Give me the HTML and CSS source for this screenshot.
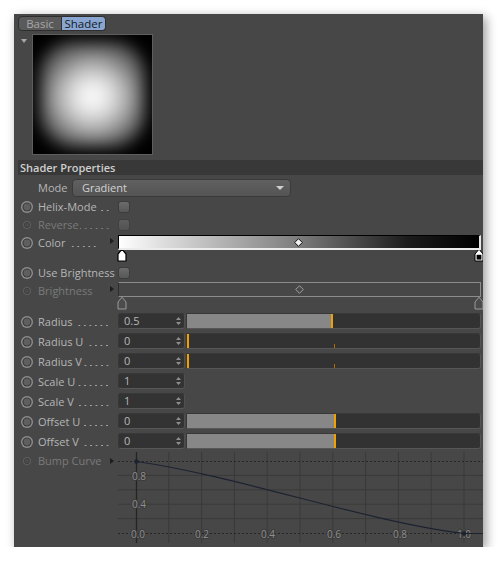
FILE: index.html
```html
<!DOCTYPE html>
<html>
<head>
<meta charset="utf-8">
<link rel="stylesheet" href="styles.css">
</head>
<body>
<div class="win">
  <div class="tabs">
    <div class="tab tab-basic">Basic</div>
    <div class="tab tab-active">Shader</div>
  </div>
  <div class="preview-row">
    <span class="tri-down"></span>
    <div class="preview"><div class="blob"></div></div>
  </div>
  <div class="group-head">Shader Properties</div>

  <div class="row row-mode">
    <span class="radio-slot"></span>
    <span class="mode-label">Mode</span>
    <div class="dropdown"><span>Gradient</span><span class="dd-arrow"></span></div>
  </div>

  <div class="row r18">
    <svg class="radio" viewBox="0 0 12 12"><circle cx="6" cy="6" r="6" fill="#8e8e8e"/><circle cx="6" cy="6" r="4.6" fill="#3c3c3c"/><circle cx="6" cy="6" r="3.4" fill="#5f5f5f"/></svg>
    <span class="label"><span>Helix-Mode</span><span class="dots"></span></span>
    <span class="acell"></span>
    <div class="ctl"><span class="check"></span></div>
  </div>

  <div class="row r18 off">
    <svg class="radio" viewBox="0 0 12 12"><circle cx="6" cy="6" r="4" fill="#5e5e5e"/><circle cx="6" cy="6" r="2.9" fill="#3e3e3e"/><circle cx="6" cy="6" r="2" fill="#4c4c4c"/></svg>
    <span class="label"><span>Reverse</span><span class="dots tight"></span></span>
    <span class="acell"></span>
    <div class="ctl"><span class="check"></span></div>
  </div>

  <div class="row r30">
    <svg class="radio" viewBox="0 0 12 12"><circle cx="6" cy="6" r="6" fill="#8e8e8e"/><circle cx="6" cy="6" r="4.6" fill="#3c3c3c"/><circle cx="6" cy="6" r="3.4" fill="#5f5f5f"/></svg>
    <span class="label"><span>Color</span><span class="dots short"></span></span>
    <span class="acell"><span class="tri-right"></span></span>
    <div class="ctl">
      <div class="gbar gbar-color">
        <svg class="diamond" viewBox="0 0 9 9"><path d="M4.5 0.7 L8.3 4.5 L4.5 8.3 L0.7 4.5 Z" fill="#f2f2f2" stroke="#111" stroke-width="1"/></svg>
      </div>
      <div class="knots">
        <svg class="knot" viewBox="0 0 10 14"><path d="M1 13 L1 6 L5 1.2 L9 6 L9 13 Z" fill="#fff" stroke="#000" stroke-width="1.2"/></svg>
        <svg class="knot knot-r" viewBox="0 0 10 14"><path d="M1 13 L1 6 L5 1.2 L9 6 L9 13 Z" fill="#fff" stroke="#000" stroke-width="1"/><rect x="2.6" y="6.8" width="4.8" height="4.8" fill="#000"/></svg>
      </div>
    </div>
  </div>

  <div class="row r18">
    <svg class="radio" viewBox="0 0 12 12"><circle cx="6" cy="6" r="6" fill="#8e8e8e"/><circle cx="6" cy="6" r="4.6" fill="#3c3c3c"/><circle cx="6" cy="6" r="3.4" fill="#5f5f5f"/></svg>
    <span class="label label-wide"><span>Use Brightness</span></span>
    <div class="ctl"><span class="check"></span></div>
  </div>

  <div class="row r30 off">
    <svg class="radio" viewBox="0 0 12 12"><circle cx="6" cy="6" r="4" fill="#5e5e5e"/><circle cx="6" cy="6" r="2.9" fill="#3e3e3e"/><circle cx="6" cy="6" r="2" fill="#4c4c4c"/></svg>
    <span class="label"><span>Brightness</span></span>
    <span class="acell"><span class="tri-right"></span></span>
    <div class="ctl">
      <div class="gbar gbar-bright">
        <svg class="diamond" viewBox="0 0 9 9"><path d="M4.5 0.7 L8.3 4.5 L4.5 8.3 L0.7 4.5 Z" fill="#4a4a4a" stroke="#a0a0a0" stroke-width="1"/></svg>
      </div>
      <div class="knots knots-bright">
        <svg class="knot" viewBox="0 0 10 14"><path d="M1 13 L1 6 L5 1.2 L9 6 L9 13 Z" fill="#4c4c4c" stroke="#9a9a9a" stroke-width="1"/></svg>
        <svg class="knot knot-r" viewBox="0 0 10 14"><path d="M1 13 L1 6 L5 1.2 L9 6 L9 13 Z" fill="#4c4c4c" stroke="#9a9a9a" stroke-width="1"/></svg>
      </div>
    </div>
  </div>

  <div class="row r20">
    <svg class="radio" viewBox="0 0 12 12"><circle cx="6" cy="6" r="6" fill="#8e8e8e"/><circle cx="6" cy="6" r="4.6" fill="#3c3c3c"/><circle cx="6" cy="6" r="3.4" fill="#5f5f5f"/></svg>
    <span class="label"><span>Radius</span><span class="dots"></span></span>
    <span class="acell"></span>
    <div class="ctl ctl-num">
      <div class="field"><span>0.5</span><svg class="spin" viewBox="0 0 5 10"><path d="M0 4 L2.5 1 L5 4 Z M0 6 L2.5 9 L5 6 Z" fill="#8e8e8e"/></svg></div>
      <div class="slider"><div class="fill" style="width:49.3%"></div><div class="mark"></div></div>
    </div>
  </div>

  <div class="row r20">
    <svg class="radio" viewBox="0 0 12 12"><circle cx="6" cy="6" r="6" fill="#8e8e8e"/><circle cx="6" cy="6" r="4.6" fill="#3c3c3c"/><circle cx="6" cy="6" r="3.4" fill="#5f5f5f"/></svg>
    <span class="label"><span>Radius U</span><span class="dots"></span></span>
    <span class="acell"></span>
    <div class="ctl ctl-num">
      <div class="field"><span>0</span><svg class="spin" viewBox="0 0 5 10"><path d="M0 4 L2.5 1 L5 4 Z M0 6 L2.5 9 L5 6 Z" fill="#8e8e8e"/></svg></div>
      <div class="slider"><div class="fill" style="width:0%"></div><div class="mark"></div><span class="tick"></span></div>
    </div>
  </div>

  <div class="row r20">
    <svg class="radio" viewBox="0 0 12 12"><circle cx="6" cy="6" r="6" fill="#8e8e8e"/><circle cx="6" cy="6" r="4.6" fill="#3c3c3c"/><circle cx="6" cy="6" r="3.4" fill="#5f5f5f"/></svg>
    <span class="label"><span>Radius V</span><span class="dots tight"></span></span>
    <span class="acell"></span>
    <div class="ctl ctl-num">
      <div class="field"><span>0</span><svg class="spin" viewBox="0 0 5 10"><path d="M0 4 L2.5 1 L5 4 Z M0 6 L2.5 9 L5 6 Z" fill="#8e8e8e"/></svg></div>
      <div class="slider"><div class="fill" style="width:0%"></div><div class="mark"></div><span class="tick"></span></div>
    </div>
  </div>

  <div class="row r20">
    <svg class="radio" viewBox="0 0 12 12"><circle cx="6" cy="6" r="6" fill="#8e8e8e"/><circle cx="6" cy="6" r="4.6" fill="#3c3c3c"/><circle cx="6" cy="6" r="3.4" fill="#5f5f5f"/></svg>
    <span class="label"><span>Scale U</span><span class="dots"></span></span>
    <span class="acell"></span>
    <div class="ctl ctl-num">
      <div class="field"><span>1</span><svg class="spin" viewBox="0 0 5 10"><path d="M0 4 L2.5 1 L5 4 Z M0 6 L2.5 9 L5 6 Z" fill="#8e8e8e"/></svg></div>
    </div>
  </div>

  <div class="row r20">
    <svg class="radio" viewBox="0 0 12 12"><circle cx="6" cy="6" r="6" fill="#8e8e8e"/><circle cx="6" cy="6" r="4.6" fill="#3c3c3c"/><circle cx="6" cy="6" r="3.4" fill="#5f5f5f"/></svg>
    <span class="label"><span>Scale V</span><span class="dots"></span></span>
    <span class="acell"></span>
    <div class="ctl ctl-num">
      <div class="field"><span>1</span><svg class="spin" viewBox="0 0 5 10"><path d="M0 4 L2.5 1 L5 4 Z M0 6 L2.5 9 L5 6 Z" fill="#8e8e8e"/></svg></div>
    </div>
  </div>

  <div class="row r20">
    <svg class="radio" viewBox="0 0 12 12"><circle cx="6" cy="6" r="6" fill="#8e8e8e"/><circle cx="6" cy="6" r="4.6" fill="#3c3c3c"/><circle cx="6" cy="6" r="3.4" fill="#5f5f5f"/></svg>
    <span class="label"><span>Offset U</span><span class="dots"></span></span>
    <span class="acell"></span>
    <div class="ctl ctl-num">
      <div class="field"><span>0</span><svg class="spin" viewBox="0 0 5 10"><path d="M0 4 L2.5 1 L5 4 Z M0 6 L2.5 9 L5 6 Z" fill="#8e8e8e"/></svg></div>
      <div class="slider"><div class="fill" style="width:50%"></div><div class="mark"></div></div>
    </div>
  </div>

  <div class="row r20">
    <svg class="radio" viewBox="0 0 12 12"><circle cx="6" cy="6" r="6" fill="#8e8e8e"/><circle cx="6" cy="6" r="4.6" fill="#3c3c3c"/><circle cx="6" cy="6" r="3.4" fill="#5f5f5f"/></svg>
    <span class="label"><span>Offset V</span><span class="dots"></span></span>
    <span class="acell"></span>
    <div class="ctl ctl-num">
      <div class="field"><span>0</span><svg class="spin" viewBox="0 0 5 10"><path d="M0 4 L2.5 1 L5 4 Z M0 6 L2.5 9 L5 6 Z" fill="#8e8e8e"/></svg></div>
      <div class="slider"><div class="fill" style="width:50%"></div><div class="mark"></div></div>
    </div>
  </div>

  <div class="row r-curve off">
    <svg class="radio" viewBox="0 0 12 12"><circle cx="6" cy="6" r="4" fill="#5e5e5e"/><circle cx="6" cy="6" r="2.9" fill="#3e3e3e"/><circle cx="6" cy="6" r="2" fill="#4c4c4c"/></svg>
    <span class="label"><span>Bump Curve</span></span>
    <span class="acell"><span class="tri-right tri-curve"></span></span>
    <div class="ctl ctl-curve">
      <svg class="graph" viewBox="0 0 365 91" width="365" height="91">
        <g stroke="#3a3a3a" stroke-width="1">
          <line x1="50.8" y1="0" x2="50.8" y2="91"/>
          <line x1="83.6" y1="0" x2="83.6" y2="91"/>
          <line x1="116.4" y1="0" x2="116.4" y2="91"/>
          <line x1="149.2" y1="0" x2="149.2" y2="91"/>
          <line x1="182" y1="0" x2="182" y2="91"/>
          <line x1="214.8" y1="0" x2="214.8" y2="91"/>
          <line x1="247.6" y1="0" x2="247.6" y2="91"/>
          <line x1="280.4" y1="0" x2="280.4" y2="91"/>
          <line x1="313.2" y1="0" x2="313.2" y2="91"/>
          <line x1="346" y1="0" x2="346" y2="91"/>
          <line x1="0" y1="23.4" x2="365" y2="23.4"/>
          <line x1="0" y1="37.8" x2="365" y2="37.8"/>
          <line x1="0" y1="52.2" x2="365" y2="52.2"/>
          <line x1="0" y1="66.6" x2="365" y2="66.6"/>
        </g>
        <g stroke="#262626" stroke-width="1" stroke-dasharray="2 2">
          <line x1="0" y1="9.5" x2="365" y2="9.5"/>
          <line x1="0" y1="81.5" x2="365" y2="81.5"/>
        </g>
        <line x1="18.5" y1="0" x2="18.5" y2="91" stroke="#242424" stroke-width="1.3"/>
        <g font-size="10" fill="#8f8f8f" text-anchor="middle" stroke="#3c3c3c" stroke-width="2" paint-order="stroke" font-family="Open Sans, Noto Sans, sans-serif">
          <text x="21" y="27.5">0.8</text>
          <text x="21" y="56.3">0.4</text>
          <text x="20" y="85.5">0.0</text>
          <text x="84" y="85.5">0.2</text>
          <text x="150" y="85.5">0.4</text>
          <text x="216" y="85.5">0.6</text>
          <text x="282" y="85.5">0.8</text>
          <text x="346" y="85.5">1.0</text>
        </g>
        <path d="M18.5 9.5 C 120 24, 250 70, 346 81.5 L 365 81.5" fill="none" stroke="#1c2330" stroke-width="1.2"/>
        <circle cx="18.5" cy="9.5" r="2.3" fill="#1c2330"/>
        <circle cx="346" cy="81.5" r="2.3" fill="#1c2330"/>
      </svg>
    </div>
  </div>
</div>
</body>
</html>
```

FILE: styles.css
```css
* { box-sizing: border-box; }

body {
  margin: 0;
  background: #ffffff;
  font-family: "Open Sans", "Noto Sans", sans-serif;
  font-size: 11px;
  color: #b6b6b6;
}

.win {
  margin: 14px 0 0 14px;
  width: 469px;
  height: 533px;
  background: #474747;
  box-shadow: 3px 3px 10px rgba(0, 0, 0, 0.4);
  overflow: hidden;
}

/* tabs */
.tabs {
  display: flex;
  padding: 2px 0 0 4px;
}
.tab {
  width: 44px;
  height: 15px;
  line-height: 13px;
  text-align: center;
  font-size: 11.5px;
  border: 1px solid #2e2e2e;
}
.tab-basic {
  background: #5a5a5a;
  color: #a8a8a8;
  border-radius: 4px 0 0 4px;
}
.tab-active {
  background: #8aa6d0;
  color: #101a28;
  border-left: none;
  border-radius: 0 4px 4px 0;
}

/* preview */
.preview-row {
  display: flex;
  margin-top: 3px;
  height: 121px;
}
.tri-down {
  width: 0;
  height: 0;
  margin: 5px 5px 0 7px;
  border-top: 4px solid #a8a8a8;
  border-left: 3px solid transparent;
  border-right: 3px solid transparent;
}
.preview {
  width: 121px;
  height: 121px;
  background: #000;
  border: 1px solid #5e5e5e;
  padding: 7px;
  overflow: hidden;
}
.blob {
  width: 100%;
  height: 100%;
  border-radius: 34px;
  background: radial-gradient(closest-side at 50% 52%, #ffffff 0%, #f4f4f4 20%, #d2d2d2 45%, #a4a4a4 70%, #747474 92%, #606060 100%);
  filter: blur(8px);
}

/* group header */
.group-head {
  margin: 5px 0 0 4px;
  height: 15px;
  line-height: 15px;
  background: #383838;
  color: #cfcfcf;
  font-weight: 600;
  padding-left: 2px;
}

/* rows */
.row {
  display: flex;
  align-items: flex-start;
  padding-left: 7px;
}
.r18 { height: 18px; }
.r20 { height: 20px; }
.r30 { height: 30px; }
.r-curve { height: 93px; }

.row-mode {
  height: 23px;
  padding-top: 4px;
}
.radio-slot {
  width: 12px;
  margin-right: 5px;
  flex: none;
}
.mode-label {
  width: 34px;
  line-height: 18px;
  flex: none;
}
.dropdown {
  width: 219px;
  height: 18px;
  border: 1px solid #3a3a3a;
  border-radius: 4px;
  background: linear-gradient(#606060, #545454);
  color: #d2d2d2;
  display: flex;
  align-items: center;
  justify-content: space-between;
  padding: 0 6px 0 9px;
  line-height: 16px;
}
.dd-arrow {
  width: 0;
  height: 0;
  border-top: 4px solid #cfcfcf;
  border-left: 4px solid transparent;
  border-right: 4px solid transparent;
}

.radio {
  width: 12px;
  height: 12px;
  flex: none;
  margin-right: 5px;
  margin-top: 3px;
}
.r20 .radio { margin-top: 4px; }

.label {
  width: 72px;
  flex: none;
  display: flex;
  white-space: nowrap;
  line-height: 18px;
}
.r20 .label { line-height: 20px; }
.label-wide { width: 80px; }

/* dotted leader drawn as decoration, aligned to the right end */
.dots {
  flex: 1;
  margin-left: 3px;
  margin-right: 0;
  align-self: stretch;
  background-image: radial-gradient(circle, #a4a4a4 0.75px, transparent 1.05px);
  background-size: 5.5px 3px;
  background-repeat: repeat-x;
  background-position: right 11px;
}
.r20 .dots { background-position: right 12px; }
.dots.tight { margin-left: 1px; }
.dots.short { flex: none; width: 27px; margin-left: 5px; background-position: left 11px; }

.off .label { color: #7a7a7a; }
.off .dots {
  background-image: radial-gradient(circle, #7c7c7c 0.75px, transparent 1.05px);
}

.acell {
  width: 8px;
  flex: none;
}
.tri-right {
  display: block;
  width: 0;
  height: 0;
  margin-top: 4px;
  border-left: 4px solid #1e1e1e;
  border-top: 3px solid transparent;
  border-bottom: 3px solid transparent;
}
.tri-curve { margin-top: 6px; }

.ctl {
  width: 363px;
  flex: none;
}

.check {
  display: block;
  width: 12px;
  height: 12px;
  margin-top: 3px;
  border-radius: 3px;
  border: 1px solid #3c3c3c;
  background: linear-gradient(#6c6c6c, #575757);
}
.off .check {
  background: linear-gradient(#5e5e5e, #525252);
  border-color: #404040;
}

/* gradient bars */
.gbar {
  position: relative;
  height: 15px;
}
.gbar-color {
  margin-top: 1px;
  background: linear-gradient(to right, #ffffff 0%, #dedede 12%, #7c7c7c 50%, #1c1c1c 80%, #000000 100%);
  border-top: 1px solid #000;
  border-left: 1px solid #000;
  border-bottom: 2px solid #ececec;
  border-right: 2px solid #e6e6e6;
}
.gbar-bright {
  background: #474747;
  border-top: 1px solid #8c8c8c;
  border-bottom: 1px solid #8c8c8c;
  border-left: 1px solid #2e2e2e;
  border-right: 1px solid #8c8c8c;
}
.diamond {
  position: absolute;
  left: 50%;
  top: 2px;
  width: 9px;
  height: 9px;
  margin-left: -5px;
}
.knots {
  display: flex;
  justify-content: space-between;
  margin-top: -2px;
  margin-right: -3px;
  margin-left: -1px;
}
.knots-bright { margin-top: -1px; }
.knot {
  width: 10px;
  height: 14px;
}

/* number fields and sliders */
.ctl-num {
  display: flex;
  gap: 1px;
  padding-top: 1px;
}
.field {
  width: 67px;
  height: 16px;
  flex: none;
  background: #333333;
  border: 1px solid #383838;
  border-bottom-color: #575757;
  border-right-color: #505050;
  border-radius: 3px;
  display: flex;
  align-items: center;
  justify-content: space-between;
  padding: 0 3px 0 5px;
  color: #b8b8b8;
  line-height: 14px;
}
.spin {
  width: 5px;
  height: 10px;
}
.slider {
  position: relative;
  flex: 1;
  height: 16px;
  background: #323232;
  border: 1px solid #383838;
  border-bottom-color: #565656;
  border-right-color: #545454;
  border-radius: 0 3px 3px 0;
  display: flex;
}
.fill {
  height: 100%;
  background: #878787;
}
.mark {
  width: 2px;
  height: 100%;
  background: #f0a000;
}
.tick {
  position: absolute;
  left: 50%;
  bottom: 0;
  width: 1px;
  height: 4px;
  background: #a87400;
}

/* curve */
.ctl-curve {
  width: 365px;
}
.graph {
  display: block;
}
```
